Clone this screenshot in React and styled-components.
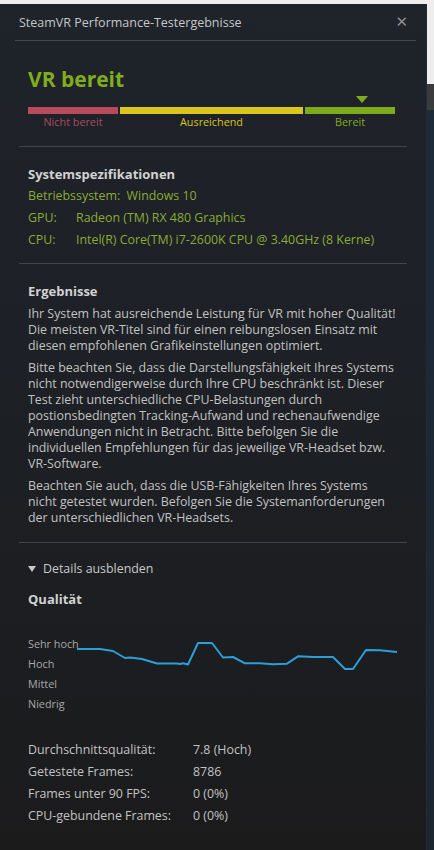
import React from "react";
import styled, { createGlobalStyle } from "styled-components";

const GlobalStyle = createGlobalStyle`
  html, body {
    margin: 0;
    padding: 0;
  }
  body {
    width: 434px;
    height: 850px;
    overflow: hidden;
    background: linear-gradient(#eeeeee 0, #eeeeee 84px, #3a3b3d 84px, #3a3b3d 110px, #1d2a38 110px, #1c2631 100%);
    font-family: "Open Sans", "Noto Sans", sans-serif;
  }
`;

const Page = styled.div`
  padding-top: 4px;
  width: 434px;
  height: 846px;
`;

const Window = styled.div`
  width: 426px;
  height: 846px;
  background: linear-gradient(#1f232a 0%, #1d2025 45%, #1b1b1c 100%);
  border-right: 1px solid #1f2d38;
  display: flex;
  flex-direction: column;
  color: #c2c2c2;
  font-size: 12.4px;
`;

const TitleBar = styled.div`
  display: flex;
  align-items: center;
  justify-content: space-between;
  height: 36px;
  margin: 0 15px 0 19px;
  font-size: 12.5px;
  color: #c5c7ca;
`;

const Close = styled.span`
  color: #8a8d92;
  font-size: 15px;
  margin-right: 3px;
  font-family: "DejaVu Sans", sans-serif;
`;

const Rule = styled.div`
  flex: none;
  height: 1px;
  background: #41464d;
  margin: ${(p) => (p.$wide ? "0 10px 0 15px" : "0 19px 0 19px")};
`;

const Section = styled.div`
  padding: ${(p) => p.$pad || "0 28px"};
`;

const Verdict = styled.h1`
  margin: 0;
  font-size: 21px;
  font-weight: 700;
  color: #80ad1d;
  line-height: 24px;
`;

const Scale = styled.div`
  display: grid;
  grid-template-columns: 90px 183px 90px;
  column-gap: 2px;
  margin-top: 16px;
`;

const Segment = styled.div`
  display: flex;
  flex-direction: column;
  align-items: center;
  position: relative;
`;

const Bar = styled.div`
  align-self: stretch;
  height: 7px;
  background: ${(p) => p.$color};
`;

const SegLabel = styled.span`
  color: ${(p) => p.$color};
  font-size: 10.8px;
  line-height: 16px;
`;

const Marker = styled.div`
  position: absolute;
  top: -11px;
  left: 51px;
  width: 0;
  height: 0;
  border-left: 6px solid transparent;
  border-right: 6px solid transparent;
  border-top: 7px solid #80ad1d;
`;

const Heading = styled.h2`
  margin: ${(p) => p.$top || 0}px 0 0;
  font-size: 13px;
  font-weight: 700;
  color: #d2d2d2;
  line-height: 18px;
`;

const SpecList = styled.div`
  display: grid;
  grid-template-columns: 48px auto;
  row-gap: 5px;
  margin-top: 4px;
  color: #8aab35;
  line-height: 17px;
`;

const SpecWide = styled.div`
  grid-column: 1 / -1;
`;

const Para = styled.p`
  margin: 6px 0 0;
  line-height: 16px;
`;

const Toggle = styled.div`
  display: flex;
  align-items: center;
  gap: 7px;
  color: #c8c8c8;
  line-height: 18px;
`;

const Caret = styled.span`
  width: 0;
  height: 0;
  border-left: 4px solid transparent;
  border-right: 4px solid transparent;
  border-top: 6px solid #c8c8c8;
`;

const Chart = styled.div`
  display: grid;
  grid-template-columns: 49px 330px;
  margin-top: 26px;
`;

const Levels = styled.div`
  display: flex;
  flex-direction: column;
  font-size: 10.8px;
  color: #a8a8a8;
  line-height: 20px;
  white-space: nowrap;
`;

const Stats = styled.div`
  display: grid;
  grid-template-columns: 165px auto;
  grid-auto-rows: 17px;
  row-gap: 5px;
  line-height: 17px;
  color: #c2c2c2;
`;

const points = [
  [77, 650], [100, 650], [113, 652], [125, 659], [130, 658.5], [142, 660],
  [157, 664.5], [177, 664.5], [180, 665], [183, 664.3], [188, 665.5],
  [198, 644], [212, 644], [223, 658.5], [233, 658], [245, 664.3],
  [260, 664.3], [273, 665.3], [287, 664.7], [298, 657.3], [313, 658],
  [333, 658], [345, 670], [353, 670], [366, 651], [380, 651.3], [397, 653],
];

const linePath = points.map(([x, y]) => `${x - 77},${y - 635}`).join(" ");

const stats = [
  ["Durchschnittsqualität:", "7.8 (Hoch)"],
  ["Getestete Frames:", "8786"],
  ["Frames unter 90 FPS:", "0 (0%)"],
  ["CPU-gebundene Frames:", "0 (0%)"],
];

export default function App() {
  return (
    <>
      <GlobalStyle />
      <Page>
        <Window>
          <TitleBar>
            <span>SteamVR Performance-Testergebnisse</span>
            <Close>✕</Close>
          </TitleBar>
          <Rule $wide />

          <Section $pad="26px 28px 16px">
            <Verdict>VR bereit</Verdict>
            <Scale>
              <Segment>
                <Bar $color="#b84a5b" />
                <SegLabel $color="#a94b5c">Nicht bereit</SegLabel>
              </Segment>
              <Segment>
                <Bar $color="#dac61d" />
                <SegLabel $color="#d6c51f">Ausreichend</SegLabel>
              </Segment>
              <Segment>
                <Marker />
                <Bar $color="#7eab1c" />
                <SegLabel $color="#80ad1d">Bereit</SegLabel>
              </Segment>
            </Scale>
          </Section>
          <Rule />

          <Section $pad="18px 28px 15px">
            <Heading>Systemspezifikationen</Heading>
            <SpecList>
              <SpecWide>Betriebssystem:&nbsp; Windows 10</SpecWide>
              <span>GPU:</span>
              <span>Radeon (TM) RX 480 Graphics</span>
              <span>CPU:</span>
              <span>Intel(R) Core(TM) i7-2600K CPU @ 3.40GHz (8 Kerne)</span>
            </SpecList>
          </Section>
          <Rule />

          <Section $pad="18px 28px 16px">
            <Heading>Ergebnisse</Heading>
            <Para>
              Ihr System hat ausreichende Leistung für VR mit hoher Qualität!
              Die meisten VR-Titel sind für einen reibungslosen Einsatz mit
              diesen empfohlenen Grafikeinstellungen optimiert.
            </Para>
            <Para>
              Bitte beachten Sie, dass die Darstellungsfähigkeit Ihres Systems
              nicht notwendigerweise durch Ihre CPU beschränkt ist. Dieser
              Test zieht unterschiedliche CPU-Belastungen durch
              postionsbedingten Tracking-Aufwand und rechenaufwendige
              Anwendungen nicht in Betracht. Bitte befolgen Sie die
              individuellen Empfehlungen für das jeweilige VR-Headset bzw.
              VR-Software.
            </Para>
            <Para>
              Beachten Sie auch, dass die USB-Fähigkeiten Ihres Systems nicht
              getestet wurden. Befolgen Sie die Systemanforderungen der
              unterschiedlichen VR-Headsets.
            </Para>
          </Section>
          <Rule />

          <Section $pad="17px 28px 0">
            <Toggle>
              <Caret />
              Details ausblenden
            </Toggle>
            <Heading $top={12}>Qualität</Heading>
            <Chart>
              <Levels>
                <span>Sehr hoch</span>
                <span>Hoch</span>
                <span>Mittel</span>
                <span>Niedrig</span>
              </Levels>
              <svg width="330" height="80" viewBox="0 0 330 80">
                <polyline
                  points={linePath}
                  fill="none"
                  stroke="#2c9fd9"
                  strokeWidth="2"
                  strokeLinejoin="round"
                />
              </svg>
            </Chart>
          </Section>

          <Section $pad="27px 28px 0">
            <Stats>
              {stats.map(([k, v]) => (
                <React.Fragment key={k}>
                  <span>{k}</span>
                  <span>{v}</span>
                </React.Fragment>
              ))}
            </Stats>
          </Section>
        </Window>
      </Page>
    </>
  );
}
